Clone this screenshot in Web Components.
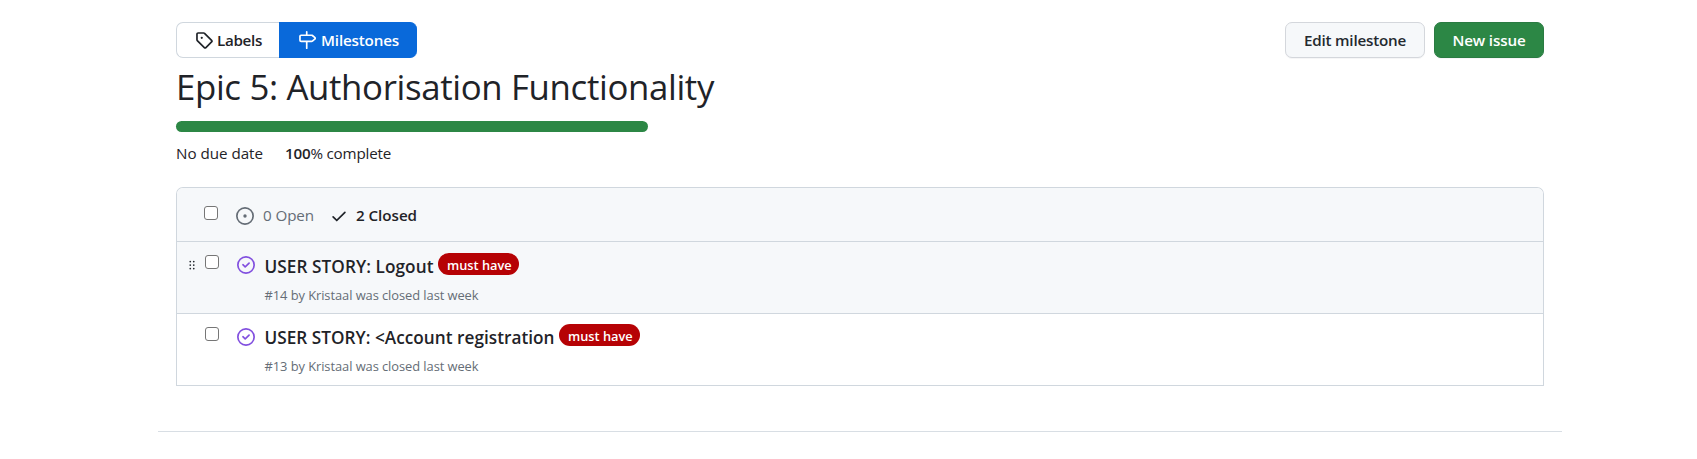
<!DOCTYPE html>
<html lang="en">
<head>
<meta charset="utf-8">
<title>Milestone</title>
<style>
body{margin:0;background:#fff;color:#1f2328;font-family:"Open Sans","Noto Sans",sans-serif;font-size:15.2px;line-height:20px}
</style>
</head>
<body>
<milestone-page></milestone-page>
<script>
const define = (name, html, after) => {
  const t = document.createElement('template');
  t.innerHTML = html;
  customElements.define(name, class extends HTMLElement {
    connectedCallback() {
      if (this.shadowRoot) return;
      this.attachShadow({mode: 'open'}).append(t.content.cloneNode(true));
      if (after) after(this, this.shadowRoot);
    }
  });
};

const ICONS = {
  tag: '<path d="M1 7.775V2.75C1 1.784 1.784 1 2.75 1h5.025c.464 0 .91.184 1.238.513l6.25 6.25a1.75 1.75 0 0 1 0 2.474l-5.026 5.026a1.75 1.75 0 0 1-2.474 0l-6.25-6.25A1.752 1.752 0 0 1 1 7.775Zm1.5 0c0 .066.026.13.073.177l6.25 6.25a.25.25 0 0 0 .354 0l5.025-5.025a.25.25 0 0 0 0-.354l-6.25-6.25a.25.25 0 0 0-.177-.073H2.75a.25.25 0 0 0-.25.25ZM6 5a1 1 0 1 1 0 2 1 1 0 0 1 0-2Z"/>',
  milestone: '<path d="M7.75 0a.75.75 0 0 1 .75.75V3h3.634c.414 0 .814.147 1.13.414l2.07 1.75a1.75 1.75 0 0 1 0 2.672l-2.07 1.75a1.75 1.75 0 0 1-1.13.414H8.5v5.25a.75.75 0 0 1-1.5 0V10H2.75A1.75 1.75 0 0 1 1 8.25v-3.5C1 3.784 1.784 3 2.75 3H7V.75A.75.75 0 0 1 7.75 0Zm4.384 8.5a.25.25 0 0 0 .161-.06l2.07-1.75a.248.248 0 0 0 0-.38l-2.07-1.75a.25.25 0 0 0-.161-.06H2.75a.25.25 0 0 0-.25.25v3.5c0 .138.112.25.25.25h9.384Z"/>',
  open: '<path d="M8 9.5a1.5 1.5 0 1 0 0-3 1.5 1.5 0 0 0 0 3Z"/><path d="M8 0a8 8 0 1 1 0 16A8 8 0 0 1 8 0ZM1.5 8a6.5 6.5 0 1 0 13 0 6.5 6.5 0 0 0-13 0Z"/>',
  check: '<path d="M13.78 4.22a.75.75 0 0 1 0 1.06l-7.25 7.25a.75.75 0 0 1-1.06 0L2.22 9.28a.751.751 0 0 1 .018-1.042.751.751 0 0 1 1.042-.018L6 10.94l6.72-6.72a.75.75 0 0 1 1.06 0Z"/>',
  closed: '<path d="M11.28 6.78a.75.75 0 0 0-1.06-1.06L7.25 8.69 5.78 7.22a.75.75 0 0 0-1.06 1.06l2 2a.75.75 0 0 0 1.06 0l3.5-3.5Z"/><path d="M16 8A8 8 0 1 1 0 8a8 8 0 0 1 16 0Zm-1.5 0a6.5 6.5 0 1 0-13 0 6.5 6.5 0 0 0 13 0Z"/>',
  grip: '<path d="M10 13a1 1 0 1 1 0-2 1 1 0 0 1 0 2Zm0-4a1 1 0 1 1 0-2 1 1 0 0 1 0 2Zm-4 4a1 1 0 1 1 0-2 1 1 0 0 1 0 2Zm5-9a1 1 0 1 1-2 0 1 1 0 0 1 2 0ZM7 8a1 1 0 1 1-2 0 1 1 0 0 1 2 0ZM6 5a1 1 0 1 1 0-2 1 1 0 0 1 0 2Z"/>'
};
define('oct-icon', '<style>:host{display:block;width:18px;height:18px;flex:none}svg{display:block;width:100%;height:100%;fill:currentColor}</style><svg viewBox="0 0 16 16"></svg>',
  (el, root) => { root.querySelector('svg').innerHTML = ICONS[el.getAttribute('name')]; });

/* A single line of text, tracked so that it fills the width in its w attribute. */
define('fit-text', '<style>:host{display:block;flex:none;white-space:pre}span{display:inline-block}</style><span><slot></slot></span>',
  (el, root) => {
    const w = +el.getAttribute('w'), s = root.querySelector('span');
    el.style.width = w + 'px';
    const n = [...el.textContent].length;
    s.style.letterSpacing = (w - s.getBoundingClientRect().width) / n + 'px';
  });

define('check-box', '<style>:host{display:block;flex:none;width:14px;height:14px;box-sizing:border-box;border:1px solid #767676;border-radius:3px;background:#fff}</style>');

define('action-button', `<style>
:host{display:flex;box-sizing:border-box;height:36px;align-items:center;justify-content:center;font-weight:600;border:1px solid #d4d7dc;border-radius:7px;background:#f6f8fa;color:#24292f;box-shadow:0 1px 0 rgba(31,35,40,.04)}
:host([primary]){background:#2c8745;border-color:#2a7b42;color:#fff}
</style><slot></slot>`);

define('nav-tab', `<style>
:host{display:flex;box-sizing:border-box;height:36px;align-items:center;gap:4px;font-weight:600;border:1px solid #d0d7de;border-right:0;border-radius:7px 0 0 7px;padding-left:18px}
:host([selected]){background:#0969da;border-color:#0969da;color:#fff;border-radius:0 7px 7px 0;gap:5px}
</style><slot></slot>`);

define('label-pill', `<style>
:host{display:block;flex:none;box-sizing:border-box;width:81px;height:22px;border-radius:11px;background:#b60205;color:#fff;font-size:12.8px;font-weight:600;line-height:24px;padding:0 9px}
</style><fit-text w="63"><slot></slot></fit-text>`);

define('issue-row', `<style>
:host{display:flex;box-sizing:border-box;height:72px;align-items:flex-start;border-bottom:1px solid #d0d7de;padding-left:8px}
:host([hovered]){background:#f6f8fa}
.grip{width:16px;padding-top:15px;margin-right:4px;color:#24292f}
.grip oct-icon{width:14px;height:16px;visibility:hidden}
:host([hovered]) .grip oct-icon{visibility:visible}
check-box{margin-top:13px}
.state{margin:14px 9.5px 0 18px;color:#8250df}
.body{padding-top:10px}
:host([hovered]) .body{padding-top:11px}
.title{display:flex;gap:4.5px;font-size:17.2px;font-weight:600;line-height:28px;height:32px;align-items:flex-start}
.meta{font-size:12.9px;color:#656d76}
</style>
<div class="grip"><oct-icon name="grip"></oct-icon></div><check-box></check-box><oct-icon class="state" name="closed"></oct-icon>
<div class="body"><div class="title"><slot></slot><slot name="label"></slot></div><div class="meta"><slot name="meta"></slot></div></div>`);

define('milestone-page', `<style>
:host{display:flow-root}
.wrap{width:1368px;margin-left:176px}
.bar{display:flex;margin-top:22px;height:36px}
.space{flex:1}
h1{margin:5px 0 0;font-size:34.8px;line-height:48px;height:58px;font-weight:400}
.progress{width:472px;height:11px;border-radius:5.5px;background:#2c8745}
.meta{display:flex;margin-top:11px;height:44px}
.meta b{font-weight:600}
.box{box-sizing:border-box;border:1px solid #d0d7de;border-bottom:0;border-radius:7px 7px 0 0;overflow:hidden}
.head{display:flex;height:53px;background:#f6f8fa;border-bottom:1px solid #d0d7de;padding-left:27px;align-items:flex-start}
.head check-box{margin-top:18px}
.head oct-icon{margin-top:19px}
.head fit-text{margin-top:17px}
.foot{width:1404px;margin:45px 0 0 158px;border-top:1px solid #d8dee4}
</style>
<div class="wrap">
<div class="bar">
<nav-tab style="width:103px"><oct-icon name="tag"></oct-icon><fit-text w="45">Labels</fit-text></nav-tab>
<nav-tab selected style="width:138px"><oct-icon name="milestone"></oct-icon><fit-text w="78">Milestones</fit-text></nav-tab>
<div class="space"></div>
<action-button style="width:140px;margin-right:9px"><fit-text w="102">Edit milestone</fit-text></action-button>
<action-button primary style="width:110px"><fit-text w="73">New issue</fit-text></action-button>
</div>
<h1><fit-text w="538">Epic 5: Authorisation Functionality</fit-text></h1>
<div class="progress"></div>
<div class="meta"><fit-text w="87">No due date</fit-text><fit-text w="106" style="margin-left:22px"><b>100</b>% complete</fit-text></div>
<div class="box">
<div class="head"><check-box></check-box><oct-icon name="open" style="margin-left:18px;color:#656d76"></oct-icon><fit-text w="51" style="margin-left:9px;color:#656d76">0 Open</fit-text><oct-icon name="check" style="margin-left:16px"></oct-icon><fit-text w="61" style="margin-left:8px;font-weight:600">2 Closed</fit-text></div>
<issue-row hovered><fit-text w="169">USER STORY: Logout</fit-text><label-pill slot="label">must have</label-pill><fit-text slot="meta" w="214">#14 by Kristaal was closed last week</fit-text></issue-row>
<issue-row><fit-text w="290">USER STORY: &lt;Account registration</fit-text><label-pill slot="label">must have</label-pill><fit-text slot="meta" w="214">#13 by Kristaal was closed last week</fit-text></issue-row>
</div>
</div>
<div class="foot"></div>`);
</script>
</body>
</html>
